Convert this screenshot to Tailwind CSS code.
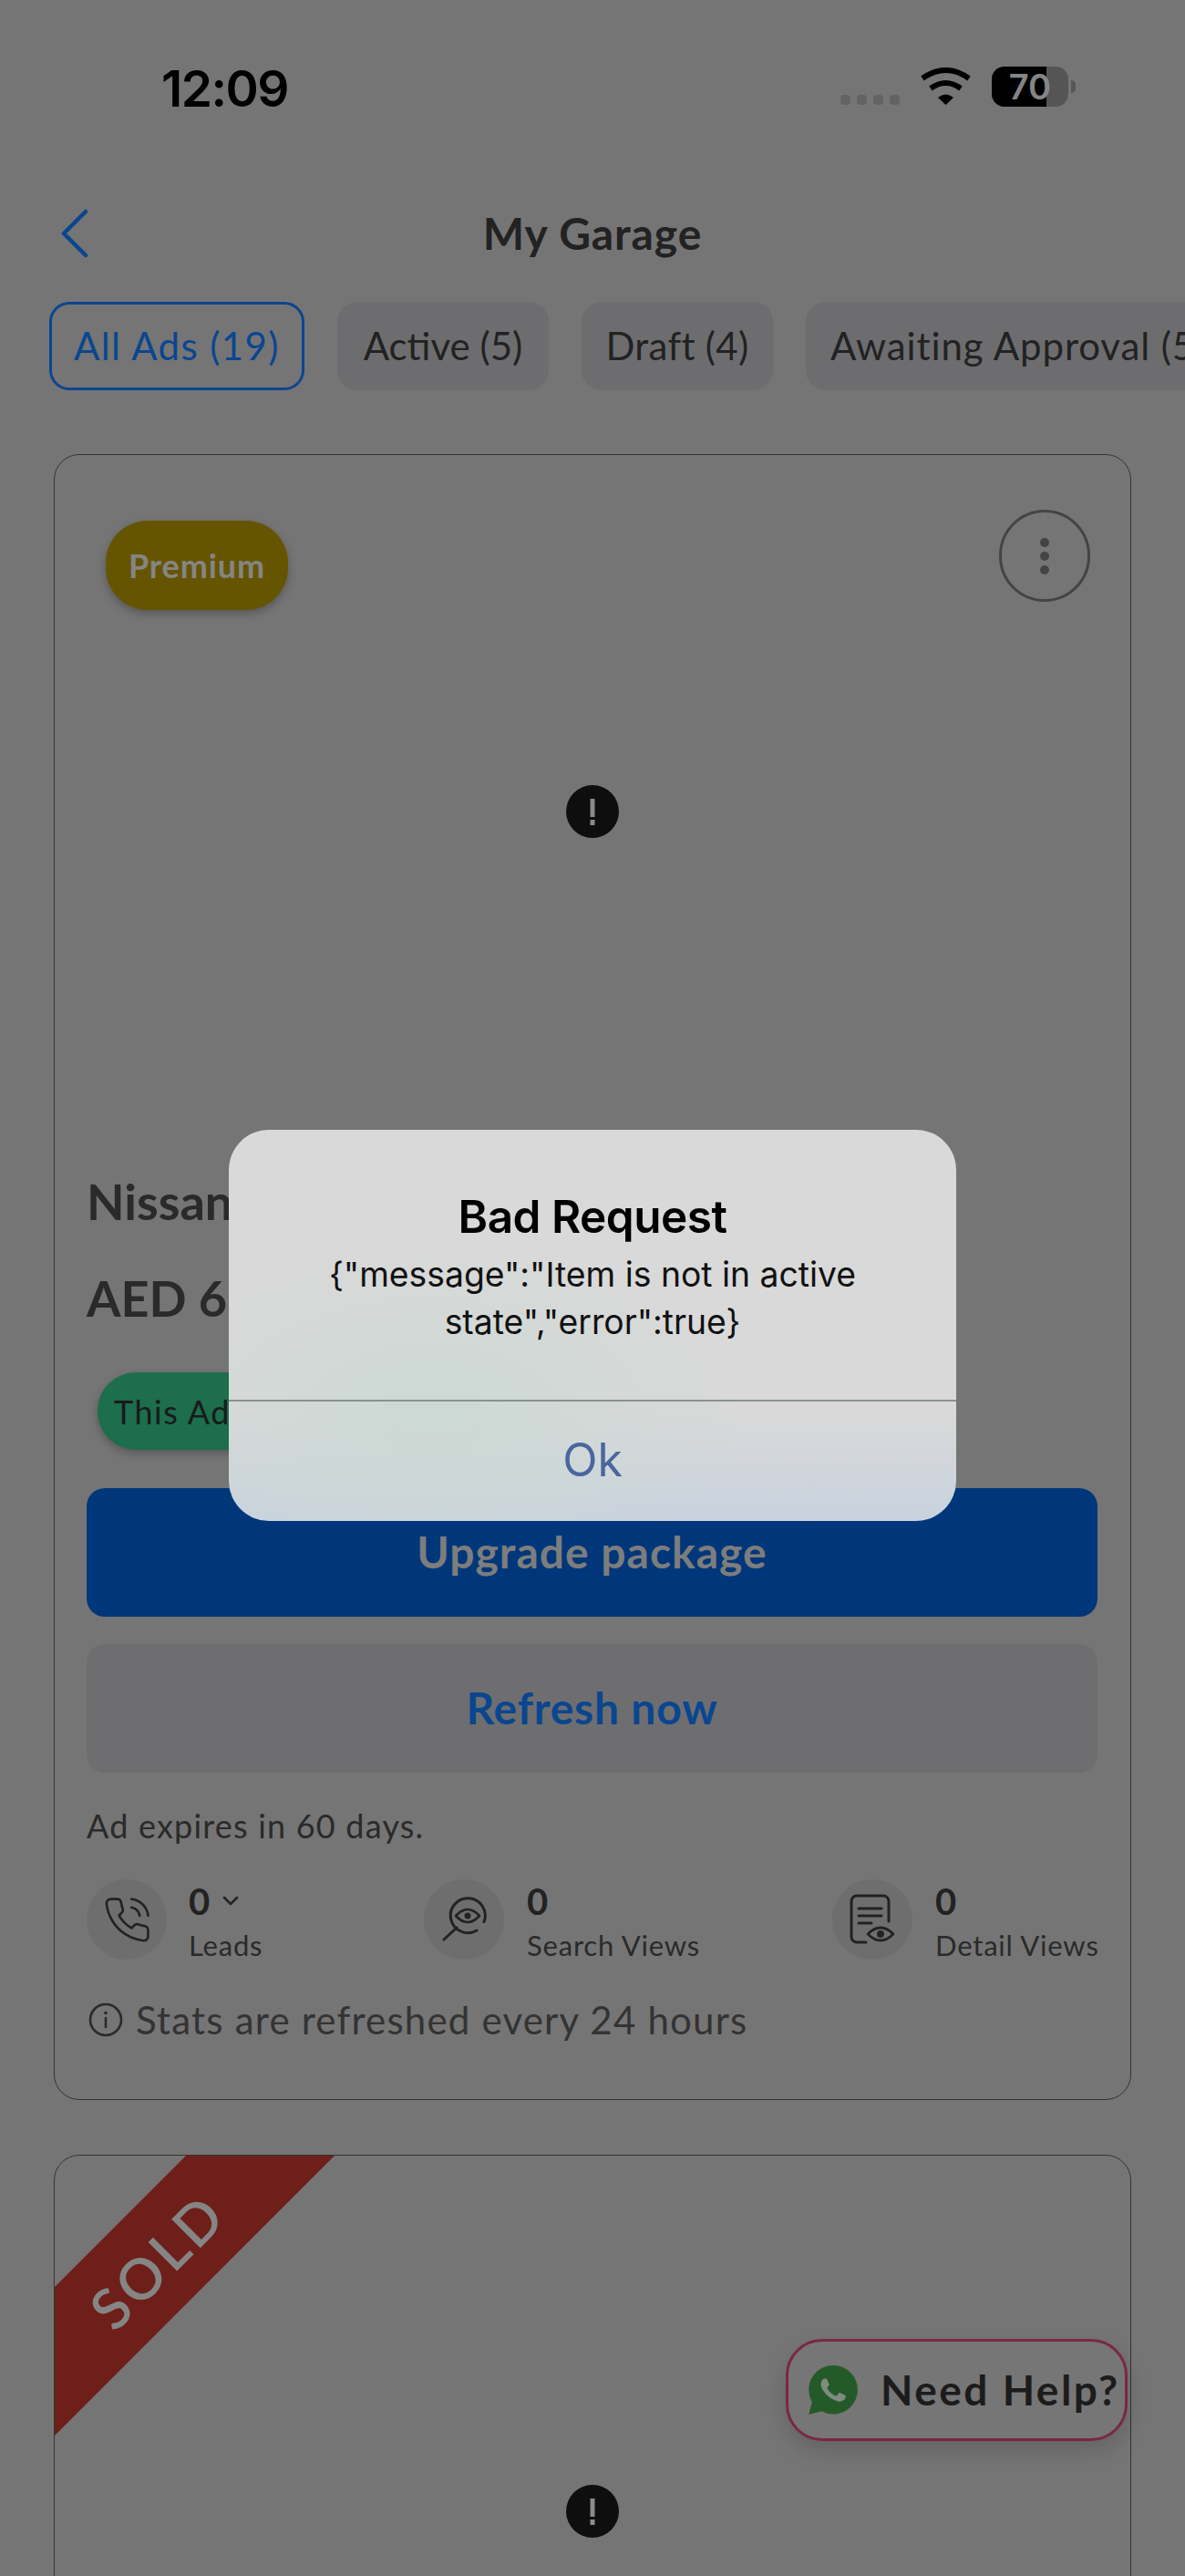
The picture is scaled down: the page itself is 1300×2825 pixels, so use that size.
<!DOCTYPE html>
<html>
<head>
<meta charset="utf-8">
<script src="https://cdn.jsdelivr.net/npm/@tailwindcss/browser@4"></script>
</head>
<body>
<div class="relative w-[1300px] h-[2825px] overflow-hidden bg-[#757575] font-['Lato',sans-serif] text-[#222222]">

  <!-- Status bar -->
  <div class="flex items-start justify-between h-[206px] pl-[177px] pr-[120px] pt-[72px]">
    <div class="font-['Inter',sans-serif] font-semibold text-[55px] leading-[50px] tracking-[-1.5px] text-black">12:09</div>
    <div class="flex items-start">
      <div class="flex gap-[7px] mt-[32px]">
        <div class="w-[11px] h-[11px] rounded-[4px] bg-[#636363]"></div>
        <div class="w-[11px] h-[11px] rounded-[4px] bg-[#636363]"></div>
        <div class="w-[11px] h-[11px] rounded-[4px] bg-[#636363]"></div>
        <div class="w-[11px] h-[11px] rounded-[4px] bg-[#636363]"></div>
      </div>
      <svg class="ml-[22px] mt-[2px]" width="57" height="41" viewBox="0 0 57 41"><path d="M3 12Q28.5-6 54 12" fill="none" stroke="#000" stroke-width="6"/><path d="M12 23Q28.5 11 45 23" fill="none" stroke="#000" stroke-width="6"/><path d="M20 33Q28.5 26 37 33L28.5 41Z" fill="#000"/></svg>
      <div class="relative ml-[22px] mt-[1px] w-[84px] h-[44px] rounded-[14px] bg-[#555555] overflow-hidden">
        <div class="w-[60px] h-full bg-black"></div>
        <div class="absolute inset-0 flex items-center justify-center font-['Inter',sans-serif] font-semibold text-[38px] leading-none text-[#858585]">70</div>
      </div>
      <div class="ml-[3px] mt-[16px] w-[5px] h-[14px] rounded-r-[5px] bg-[#555555]"></div>
    </div>
  </div>

  <!-- Header -->
  <div class="grid grid-cols-[1fr_auto_1fr] items-center h-[100px]">
    <svg class="ml-[67px]" width="30" height="54" viewBox="0 0 30 54"><path d="M27 3 3 27l24 24" fill="none" stroke="#0a4690" stroke-width="4.5" stroke-linecap="round" stroke-linejoin="round"/></svg>
    <div class="text-[48px] leading-[60px] font-bold tracking-[0.9px] text-[#222222]">My Garage</div>
    <div></div>
  </div>

  <!-- Tabs -->
  <div class="flex gap-[36px] mt-[25px] pl-[54px] h-[97px] whitespace-nowrap">
    <div class="shrink-0 flex items-center justify-center w-[280px] rounded-[22px] border-[3px] border-[#0a4690] text-[42px] tracking-[1.4px] text-[#0a4690]">All Ads (19)</div>
    <div class="shrink-0 flex items-center justify-center w-[232px] rounded-[22px] bg-[#6d6d6f] text-[42px] text-[#222222]">Active (5)</div>
    <div class="shrink-0 flex items-center justify-center w-[210px] rounded-[22px] bg-[#6d6d6f] text-[42px] tracking-[0.3px] text-[#222222]">Draft (4)</div>
    <div class="shrink-0 flex items-center px-[27px] rounded-[22px] bg-[#6d6d6f] text-[42px] tracking-[0.9px] text-[#222222]">Awaiting Approval (5)</div>
  </div>

  <!-- Card 1 -->
  <div class="mt-[70px] mx-[59px] h-[1805px] rounded-[28px] border border-[#333333]">
    <div class="flex items-start justify-between pl-[56px] pr-[44px] pt-[60px]">
      <div class="mt-[12px] flex items-center justify-center w-[200px] h-[98px] rounded-[46px] bg-[#665500] shadow-[0_4px_10px_rgba(0,0,0,0.25)] text-[36px] font-bold tracking-[0.9px] text-[#858585]">Premium</div>
      <div class="flex flex-col items-center justify-center gap-[5px] w-[100px] h-[101px] rounded-full border-[3px] border-[#444444]">
        <div class="w-[10px] h-[10px] rounded-full bg-[#444444]"></div>
        <div class="w-[10px] h-[10px] rounded-full bg-[#444444]"></div>
        <div class="w-[10px] h-[10px] rounded-full bg-[#444444]"></div>
      </div>
    </div>
    <div class="flex justify-center mt-[192px]">
      <svg width="58" height="58" viewBox="0 0 58 58"><circle cx="29" cy="29" r="29" fill="#0e0e0e"/><rect x="26.5" y="15" width="5" height="20" fill="#8a8a8a"/><rect x="26.5" y="38" width="5" height="6" fill="#8a8a8a"/></svg>
    </div>
    <div class="pl-[35px] pr-[36px]">
      <div class="mt-[369px] h-[60px] text-[54px] leading-[60px] font-bold text-[#2a2a2a]">Nissan</div>
      <div class="mt-[46px] h-[60px] text-[54px] leading-[60px] font-bold text-[#2a2a2a]">AED 6</div>
      <div class="mt-[51px] ml-[12px] flex items-center w-[420px] h-[85px] pl-[18px] rounded-[42px] bg-[#1c6e4c] shadow-[0_4px_10px_rgba(0,0,0,0.25)] text-[36px] tracking-[1.5px] text-[#1a1a1a]">This Ad</div>
      <div class="mt-[42px] flex items-center justify-center h-[141px] pb-[2px] rounded-[20px] bg-[#00377a] text-[48px] font-bold tracking-[1px] text-[#7d7d7d]">Upgrade package</div>
      <div class="mt-[30px] flex items-center justify-center h-[141px] pb-[2px] rounded-[20px] bg-[#6e6e70] text-[48px] font-bold tracking-[0.8px] text-[#0a4690]">Refresh now</div>
      <div class="mt-[38px] h-[40px] text-[36px] leading-[40px] tracking-[1.2px] text-[#2a2a2a]">Ad expires in 60 days.</div>
      <div class="mt-[39px] flex h-[88px] whitespace-nowrap">
        <div class="shrink-0 flex gap-[24px] w-[370px]">
          <div class="flex items-center justify-center w-[88px] h-[88px] rounded-full bg-[#6e6e6e]">
            <svg width="55" height="55" viewBox="0 0 24 24" fill="none" stroke="#222" stroke-width="1.15" stroke-linecap="round" stroke-linejoin="round"><path d="M22 16.92v3a2 2 0 0 1-2.18 2 19.79 19.79 0 0 1-8.63-3.07 19.5 19.5 0 0 1-6-6 19.79 19.79 0 0 1-3.07-8.67A2 2 0 0 1 4.11 2h3a2 2 0 0 1 2 1.72 12.84 12.84 0 0 0 .7 2.81 2 2 0 0 1-.45 2.11L8.09 9.91a16 16 0 0 0 6 6l1.27-1.27a2 2 0 0 1 2.11-.45 12.84 12.84 0 0 0 2.81.7A2 2 0 0 1 22 16.92z"/><path d="M14.05 2a9 9 0 0 1 8 7.94"/><path d="M14.05 6A5 5 0 0 1 18 10"/></svg>
          </div>
          <div>
            <div class="flex items-center h-[48px] text-[40px] font-bold text-[#222222]">0<svg class="ml-[14px]" width="18" height="12" viewBox="0 0 18 12" fill="none" stroke="#222" stroke-width="2.5" stroke-linecap="round" stroke-linejoin="round"><path d="M2 2l7 7 7-7"/></svg></div>
            <div class="h-[48px] text-[31px] leading-[48px] tracking-[0.8px] text-[#2a2a2a]">Leads</div>
          </div>
        </div>
        <div class="shrink-0 flex gap-[25px] w-[448px]">
          <div class="flex items-center justify-center w-[88px] h-[88px] rounded-full bg-[#6e6e6e]">
            <svg width="60" height="60" viewBox="0 0 60 60" fill="none" stroke="#222" stroke-width="3" stroke-linecap="round" stroke-linejoin="round"><path d="M52 32.500A19 19 0 1 0 44 42"/><path d="M8 52 22 39"/><path d="M21 26q13-14 26 0q-13 14-26 0z" stroke-width="2.6"/><circle cx="34" cy="26" r="3.500" fill="#222" stroke="none"/></svg>
          </div>
          <div>
            <div class="flex items-center h-[48px] text-[40px] font-bold text-[#222222]">0</div>
            <div class="h-[48px] text-[31px] leading-[48px] tracking-[0.8px] text-[#2a2a2a]">Search Views</div>
          </div>
        </div>
        <div class="shrink-0 flex gap-[25px]">
          <div class="flex items-center justify-center w-[88px] h-[88px] rounded-full bg-[#6e6e6e]">
            <svg width="60" height="60" viewBox="0 0 60 60" fill="none" stroke="#222" stroke-width="3" stroke-linecap="round" stroke-linejoin="round"><path d="M48 32V10a6 6 0 0 0-6-6H13a6 6 0 0 0-6 6v39a6 6 0 0 0 6 6h10"/><path d="M15 18h25M15 26h25M15 34h14"/><path d="M25 46q14-14 28 0q-14 14-28 0z" stroke-width="2.6"/><circle cx="39" cy="46" r="4" fill="#222" stroke="none"/></svg>
          </div>
          <div>
            <div class="flex items-center h-[48px] text-[40px] font-bold text-[#222222]">0</div>
            <div class="h-[48px] text-[31px] leading-[48px] tracking-[0.8px] text-[#2a2a2a]">Detail Views</div>
          </div>
        </div>
      </div>
      <div class="mt-[46px] flex items-center gap-[14px] h-[40px] text-[42px] leading-[40px] tracking-[1.2px] text-[#333333]">
        <svg class="ml-[2px]" width="38" height="38" viewBox="0 0 38 38" fill="none" stroke="#2a2a2a" stroke-width="2.6"><circle cx="19" cy="19" r="17"/><path d="M19 17v10" stroke-linecap="round"/><circle cx="19" cy="11.500" r="1.800" fill="#2a2a2a" stroke="none"/></svg>
        <span>Stats are refreshed every 24 hours</span>
      </div>
    </div>
  </div>

  <!-- Card 2 -->
  <div class="relative mt-[60px] mx-[59px] h-[600px] rounded-[28px] border border-[#333333] overflow-hidden">
    <svg class="absolute left-0 top-0" width="320" height="320" viewBox="0 0 320 320"><path d="M144 0H307L0 307V144Z" fill="#6e1f19"/></svg>
    <div class="absolute left-[112px] top-[115px] -translate-x-1/2 -translate-y-1/2 -rotate-45 text-[62px] leading-none font-semibold tracking-[4px] text-[#858585]">SOLD</div>
    <div class="flex justify-center mt-[361px]">
      <svg width="58" height="58" viewBox="0 0 58 58"><circle cx="29" cy="29" r="29" fill="#0e0e0e"/><rect x="26.5" y="15" width="5" height="20" fill="#8a8a8a"/><rect x="26.5" y="38" width="5" height="6" fill="#8a8a8a"/></svg>
    </div>
  </div>

  <!-- Need Help -->
  <div class="absolute left-[862px] top-[2565px] w-[375px] h-[112px] flex items-center gap-[25px] pl-[22px] rounded-[40px] border-[3px] border-[#7a2840] bg-[#767676] shadow-[0_10px_24px_rgba(0,0,0,0.15)] whitespace-nowrap">
    <svg width="54" height="54" viewBox="0 0 24 24"><path d="M.057 24l1.688-6.163A11.87 11.87 0 0 1 .157 11.892C.16 5.335 5.495 0 12.05 0c6.555 0 11.89 5.335 11.893 11.892 0 6.558-5.339 11.902-11.893 11.902a11.88 11.88 0 0 1-5.688-1.448z" fill="#245a28"/><path d="M17.472 14.382c-.297-.149-1.758-.867-2.03-.967-.273-.099-.471-.148-.67.15-.197.297-.767.966-.94 1.164-.173.199-.347.223-.644.075-.297-.15-1.255-.463-2.39-1.475-.883-.788-1.48-1.761-1.653-2.059-.173-.297-.018-.458.13-.606.134-.133.298-.347.446-.52.149-.174.198-.298.298-.497.099-.198.05-.371-.025-.52-.075-.149-.669-1.612-.916-2.207-.242-.579-.487-.5-.669-.51-.173-.008-.371-.01-.57-.01-.198 0-.52.074-.792.372-.272.297-1.04 1.016-1.04 2.479 0 1.462 1.065 2.875 1.213 3.074.149.198 2.096 3.2 5.077 4.487.709.306 1.262.489 1.694.625.712.227 1.36.195 1.871.118.571-.085 1.758-.719 2.006-1.413.248-.694.248-1.289.173-1.413-.074-.124-.272-.198-.57-.347z" fill="#808a80"/></svg>
    <span class="text-[46px] leading-none font-bold tracking-[2.5px] text-[#1c1c1c]">Need Help?</span>
  </div>

  <!-- Dialog -->
  <div class="absolute left-[251px] top-[1239px] w-[798px] h-[429px] rounded-[44px] overflow-hidden flex flex-col font-['Inter',sans-serif] text-center bg-[radial-gradient(ellipse_at_28%_72%,#ccd9d4_0%,rgba(204,217,212,0)_42%),linear-gradient(180deg,#d9d9d9_72%,#c8d2de_100%)]">
    <div class="h-[296px] flex flex-col items-center px-[60px] pt-[70px]">
      <div class="text-[49.5px] leading-[50px] font-semibold text-black tracking-[-0.5px]">Bad Request</div>
      <div class="mt-[13px] text-[37.300px] leading-[52px] text-[#111111]">{"message":"Item is not in active state","error":true}</div>
    </div>
    <div class="h-[2px] bg-[#8a9290]"></div>
    <div class="flex-1 flex items-center justify-center pb-[2px] text-[50px] text-[#4a66a0]">Ok</div>
  </div>
</div>
</body>
</html>
